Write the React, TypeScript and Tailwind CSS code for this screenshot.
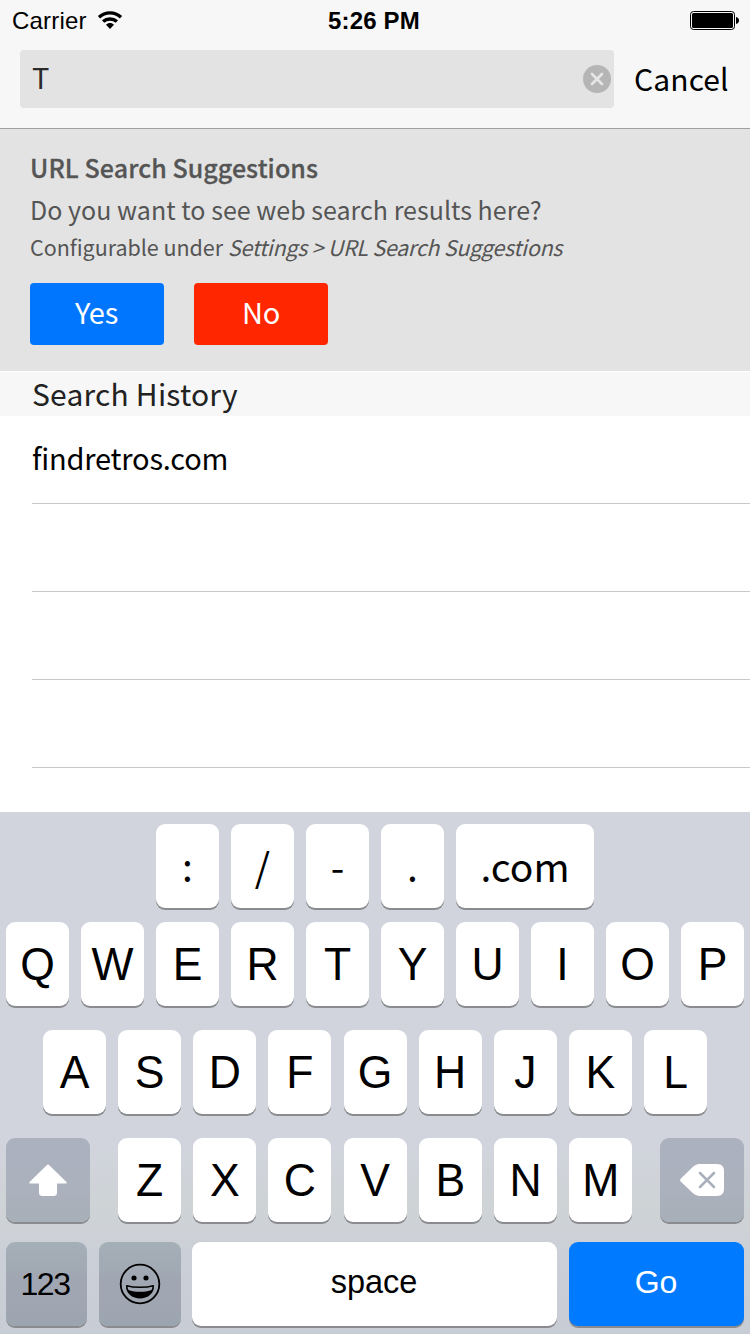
import type { ReactNode } from "react";

const sourceFont = "font-['Noto_Sans_CJK_JP','Noto_Sans_CJK_SC',sans-serif]";
const systemFont = "font-['Liberation_Sans',Arial,sans-serif]";

function Key({
  children,
  className = "w-[63px]",
  fill = "bg-white",
}: {
  children: ReactNode;
  className?: string;
  fill?: string;
}) {
  return (
    <button
      type="button"
      className={`flex h-[84px] shrink-0 justify-center rounded-[9px] shadow-[0_2px_0_#898b8f] ${fill} ${className}`}
    >
      {children}
    </button>
  );
}

function LetterKey({ letter }: { letter: string }) {
  return (
    <Key>
      <span className="scale-y-105 text-[44.5px] leading-[84px]">{letter}</span>
    </Key>
  );
}

function WifiIcon() {
  return (
    <svg width="26" height="20" viewBox="0 0 26 20" fill="none" stroke="#000" strokeWidth="3.4">
      <path d="M2 7.2C8.2 1.4 17.8 1.4 24 7.2" />
      <path d="M6.1 11.6C10 8.1 16 8.1 19.9 11.6" />
      <path d="M9 14.8C11.2 12.5 14.8 12.5 17 14.8L13 18.9Z" fill="#000" stroke="none" />
    </svg>
  );
}

function BatteryIcon() {
  return (
    <svg width="50" height="20" viewBox="0 0 50 20">
      <rect x="0.5" y="0.5" width="44" height="18" rx="3" fill="none" stroke="#000" />
      <rect x="2" y="2" width="41" height="15" rx="1.5" fill="#000" />
      <path d="M46 6C50 6.5 50 12.5 46 13Z" fill="#000" />
    </svg>
  );
}

function ClearIcon() {
  return (
    <svg width="28" height="28" viewBox="0 0 28 28">
      <circle cx="14" cy="14" r="14" fill="#b5b5b5" />
      <path d="M9 9L19 19M19 9L9 19" stroke="#e6e6e6" strokeWidth="2.7" strokeLinecap="round" />
    </svg>
  );
}

function ShiftIcon() {
  return (
    <svg width="38" height="32" viewBox="0 0 38 32" fill="#fff">
      <path d="M18 1Q19 0 20 1L37.2 17.8Q38.4 19.5 36.5 19.6H28V28.5Q28 32 24.5 32H13.5Q10 32 10 28.5V19.6H1.5Q-0.4 19.5 0.8 17.8Z" />
    </svg>
  );
}

function DeleteIcon() {
  return (
    <svg width="44" height="32" viewBox="0 0 44 32">
      <path d="M0.7 14.7L13 2.7Q16 0 19 0H37Q44 0 44 7V25Q44 32 37 32H19Q16 32 13 29.3L0.7 17.5Q-0.5 16 0.7 14.7Z" fill="#fff" />
      <path d="M20 9L34 23M34 9L20 23" stroke="#a9b0bc" strokeWidth="2.5" strokeLinecap="round" />
    </svg>
  );
}

function EmojiIcon() {
  return (
    <svg width="42" height="42" viewBox="0 0 42 42">
      <circle cx="21" cy="21" r="19.3" fill="none" stroke="#000" strokeWidth="1.8" />
      <ellipse cx="15" cy="15" rx="2.6" ry="2.5" />
      <ellipse cx="27" cy="15" rx="2.6" ry="2.5" />
      <path d="M7.8 22.7C15 24.8 27 24.8 34.2 22.7C34.5 38.600 7.5 38.600 7.8 22.7Z" fill="none" stroke="#000" strokeWidth="1.6" strokeLinejoin="round" />
      <path d="M8.3 26.400C14 29.600 28 29.600 33.7 26.400C31 37.200 11 37.200 8.3 26.400Z" />
    </svg>
  );
}

const shiftFill = "bg-[linear-gradient(#abb1be,#abb1bd_60%,#a7afb8)]";
const darkFill = "bg-[linear-gradient(#a5afb8,#a0a7b2_45%,#9fa5b1_80%,#9aa5af)]";

export default function App() {
  return (
    <div className={`flex h-[1334px] w-[750px] flex-col overflow-hidden bg-white text-black ${sourceFont}`}>
      <header className="h-[129px] border-b border-[#a0a0a0] bg-[#f7f7f7]">
        <div className={`grid h-[50px] grid-cols-3 pr-[10px] pl-3 ${systemFont}`}>
          <div className="flex">
            <span className="text-[24px] leading-[41px] tracking-[0.2px]">Carrier</span>
            <span className="pt-[10px] pl-[10px]"><WifiIcon /></span>
          </div>
          <span className="pr-[4px] text-center text-[24px] leading-[41px] font-bold tracking-[0.15px]">5:26 PM</span>
          <span className="flex justify-end pt-[11px]"><BatteryIcon /></span>
        </div>
        <div className="flex px-5">
          <div className="flex h-[58px] w-[594px] justify-between rounded-[4px] bg-[#e3e3e3] pr-[3px] pl-3">
            <span className="text-[29px] leading-[53px] text-[#2b2b2b]">T</span>
            <button type="button" className="flex h-[58px] items-center"><ClearIcon /></button>
          </div>
          <button type="button" className="ml-[20px] flex text-[30px] leading-[56px] tracking-[0.1px] whitespace-nowrap">Cancel</button>
        </div>
      </header>

      <section className="h-[242px] bg-[#e3e3e3] px-[30px] pt-[18px] whitespace-nowrap text-[#555]">
        <h1 className="text-[25px] leading-[40px] font-medium tracking-[0.07px] [-webkit-text-stroke:0.3px_#555]">URL Search Suggestions</h1>
        <p className="text-[25px] leading-[44px] tracking-[0.03px]">Do you want to see web search results here?</p>
        <p className="text-[21.5px] leading-[31px] tracking-[-0.04px]">
          Configurable under <em className="tracking-[-0.28px]">Settings &gt; URL Search Suggestions</em>
        </p>
        <div className="mt-[21px] flex gap-[30px] text-[29px] leading-[57px] text-white">
          <button type="button" className="flex h-[62px] w-[134px] justify-center rounded-[4px] bg-[#0076ff] pr-px tracking-[-0.2px]">Yes</button>
          <button type="button" className="flex h-[62px] w-[134px] justify-center rounded-[4px] bg-[#ff2600] tracking-[-0.2px]">No</button>
        </div>
      </section>

      <section className="h-[441px]">
        <h2 className="h-[45px] border-t border-white bg-[#f7f7f7] pl-8 text-[30px] leading-[42px] tracking-[0.2px] text-[#222]">Search History</h2>
        <ul className="pl-8">
          <li className="h-[88px] border-b border-[#c8c8c8] text-[29px] leading-[83px] tracking-[-0.2px]">findretros.com</li>
          <li className="h-[88px] border-b border-[#c8c8c8]" />
          <li className="h-[88px] border-b border-[#c8c8c8]" />
          <li className="h-[88px] border-b border-[#c8c8c8]" />
        </ul>
      </section>

      <section className={`flex h-[522px] flex-col bg-[linear-gradient(180deg,#d1d4dc_0px,#d1d4dc_340px,#ced3d6_390px,#ced2d6_418px,#cbcfd7_440px,#c8ccd4_522px)] pt-3 ${systemFont}`}>
        <div className={`flex justify-center gap-3 text-[39px] leading-[82px] ${sourceFont}`}>
          <Key>:</Key>
          <Key>/</Key>
          <Key>-</Key>
          <Key>.</Key>
          <Key className="w-[138px]">.com</Key>
        </div>
        <div className="mt-[14px] flex justify-between px-[6px]">
          {"QWERTYUIOP".split("").map((c) => <LetterKey key={c} letter={c} />)}
        </div>
        <div className="mt-6 flex justify-between px-[43px]">
          {"ASDFGHJKL".split("").map((c) => <LetterKey key={c} letter={c} />)}
        </div>
        <div className="mt-6 flex px-[6px]">
          <Key className="w-[84px] items-center" fill={shiftFill}><ShiftIcon /></Key>
          <div className="mr-auto ml-7 flex w-[514.4px] justify-between">
            {"ZXCVBNM".split("").map((c) => <LetterKey key={c} letter={c} />)}
          </div>
          <Key className="w-[84px] items-center" fill={shiftFill}><DeleteIcon /></Key>
        </div>
        <div className="mt-5 flex px-[6px] text-[32px]">
          <Key className="w-[81px] pr-[3px] leading-[84px]" fill={darkFill}><span className="tracking-[-1.4px]">123</span></Key>
          <Key className="ml-3 w-[82px] items-center" fill={darkFill}><EmojiIcon /></Key>
          <Key className="ml-[11px] w-[365px] pr-px text-[32.5px] leading-[80px]">space</Key>
          <Key className="ml-3 w-[175px] pr-px leading-[80px] text-white" fill="bg-[#007aff]">Go</Key>
        </div>
      </section>
    </div>
  );
}
